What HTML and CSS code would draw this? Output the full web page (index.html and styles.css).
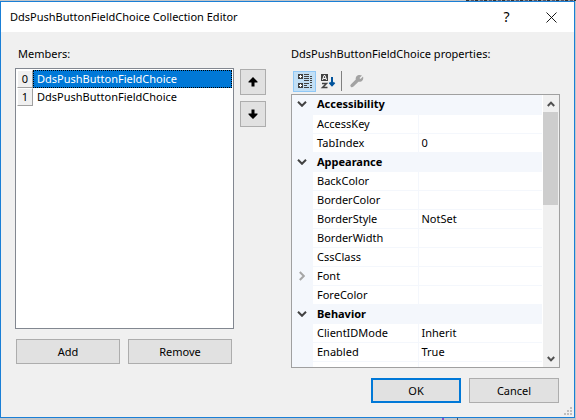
FILE: index.html
```html
<!DOCTYPE html>
<html lang="en">
<head>
<meta charset="utf-8">
<title>DdsPushButtonFieldChoice Collection Editor</title>
<link rel="stylesheet" href="styles.css">
</head>
<body>
<main class="dialog" role="dialog" aria-labelledby="dialog-title">
  <header class="titlebar">
    <h1 class="title" id="dialog-title">DdsPushButtonFieldChoice Collection Editor</h1>
    <button class="caption-button help" type="button">?</button>
    <button class="caption-button" type="button" aria-label="Close">
      <svg width="11" height="11" viewBox="0 0 11 11"><path d="M.5.5l10 10M10.500.5l-10 10" fill="none" stroke="#000" stroke-width=".9"/></svg>
    </button>
  </header>
  <div class="content">
    <div class="columns">
      <section class="members">
        <h2 class="label label-indent" id="members-label">Members:</h2>
        <ul class="listbox" role="listbox" aria-labelledby="members-label">
          <li class="item selected" role="option" aria-selected="true"><span class="index">0</span><span class="item-name">DdsPushButtonFieldChoice</span></li>
          <li class="item" role="option" aria-selected="false"><span class="index">1</span><span class="item-name">DdsPushButtonFieldChoice</span></li>
        </ul>
        <div class="member-actions">
          <button class="button" type="button">Add</button>
          <button class="button" type="button">Remove</button>
        </div>
      </section>
      <div class="movers">
        <button class="button mover" type="button" aria-label="Move up">
          <svg width="10" height="10" viewBox="0 0 10 10"><path d="M5 0L9.500 4.500V5.500H6.500V9.500H3.500V5.500H.5V4.500Z"/></svg>
        </button>
        <button class="button mover" type="button" aria-label="Move down">
          <svg width="10" height="10" viewBox="0 0 10 10"><path d="M5 10L9.500 5.500V4.500H6.500V.5H3.500V4.500H.5V5.500Z"/></svg>
        </button>
      </div>
      <section class="properties">
        <h2 class="label" id="properties-label">DdsPushButtonFieldChoice properties:</h2>
        <div class="toolbar">
          <button class="tool active" type="button" aria-label="Categorized">
            <svg width="16" height="16" viewBox="0 0 16 16" shape-rendering="crispEdges">
              <path d="M1 1h5v5H1zM1 10h5v5H1z" fill="#424242"/>
              <path d="M3 2h1v1h1v1H4v1H3V4H2V3h1zM3 11h1v1h1v1H4v1H3v-1H2v-1h1z" fill="#fff"/>
              <path d="M7 1h5v1H7zM7 3h5v1H7zM7 5h5v1H7zM7 7h5v1H7zM7 10h5v1H7zM7 12h3v1H7zM7 14h5v1H7zM13 3h2v1h-2zM13 5h2v1h-2zM13 7h2v1h-2zM13 9h2v1h-2zM13 12h2v1h-2zM13 14h2v1h-2z" fill="#424242"/>
            </svg>
          </button>
          <button class="tool" type="button" aria-label="Alphabetical">
            <svg width="16" height="16" viewBox="0 0 16 16">
              <path d="M1 1h7v7H1z" fill="#424242"/>
              <path d="M2.500 7L4 2.500h1L6.500 7M3.200 5.500h2.600" fill="none" stroke="#fff"/>
              <path d="M2 10.500h4.500L2.500 14.500H7.500" fill="none" stroke="#424242" stroke-width="1.500"/>
              <path d="M12 4v8M9.500 9.500l2.500 2.800 2.500-2.800" fill="none" stroke="#00539c" stroke-width="2"/>
            </svg>
          </button>
          <span class="separator"></span>
          <button class="tool" type="button" aria-label="Property pages" disabled>
            <svg width="16" height="16" viewBox="0 0 16 16"><path d="M13 2.500L10.500 5 11.500 6 14 3.500C15 6.500 13 9.200 9.500 8.800L4.500 13.500Q3 15 1.800 13.800T2 11.200L6.800 6.500C6 3.200 9.500.8 13 2.500Z" fill="#a3a3a3"/></svg>
          </button>
        </div>
        <div class="property-panel">
          <div class="viewport">
            <table class="grid" aria-labelledby="properties-label">
              <colgroup><col class="col-gutter"><col class="col-name"><col></colgroup>
              <tbody>
                <tr class="category"><td><svg class="chevron" width="10" height="6" viewBox="0 0 10 6"><path d="M1 .8l4 4 4-4"/></svg></td><th colspan="2">Accessibility</th></tr>
                <tr><td></td><th>AccessKey</th><td></td></tr>
                <tr><td></td><th>TabIndex</th><td>0</td></tr>
                <tr class="category"><td><svg class="chevron" width="10" height="6" viewBox="0 0 10 6"><path d="M1 .8l4 4 4-4"/></svg></td><th colspan="2">Appearance</th></tr>
                <tr><td></td><th>BackColor</th><td></td></tr>
                <tr><td></td><th>BorderColor</th><td></td></tr>
                <tr><td></td><th>BorderStyle</th><td>NotSet</td></tr>
                <tr><td></td><th>BorderWidth</th><td></td></tr>
                <tr><td></td><th>CssClass</th><td></td></tr>
                <tr><td><svg class="chevron collapsed" width="6" height="10" viewBox="0 0 6 10"><path d="M.8 1l4 4-4 4"/></svg></td><th>Font</th><td></td></tr>
                <tr><td></td><th>ForeColor</th><td></td></tr>
                <tr class="category"><td><svg class="chevron" width="10" height="6" viewBox="0 0 10 6"><path d="M1 .8l4 4 4-4"/></svg></td><th colspan="2">Behavior</th></tr>
                <tr><td></td><th>ClientIDMode</th><td>Inherit</td></tr>
                <tr><td></td><th>Enabled</th><td>True</td></tr>
                <tr><td></td><th>EnableTheming</th><td>True</td></tr>
              </tbody>
            </table>
          </div>
          <div class="scrollbar">
            <span class="scroll-arrow"><svg width="8" height="6" viewBox="0 0 8 6"><path d="M.8 5L4 1.600 7.200 5"/></svg></span>
            <span class="thumb"></span>
            <span class="scroll-arrow scroll-down"><svg width="8" height="6" viewBox="0 0 8 6"><path d="M.8 1L4 4.400 7.200 1"/></svg></span>
          </div>
        </div>
      </section>
    </div>
    <footer class="footer">
      <button class="button confirm default" type="button">OK</button>
      <button class="button confirm" type="button">Cancel</button>
    </footer>
    <svg class="grip" width="8" height="8" viewBox="0 0 8 8"><path d="M6 0h2v2H6zM3 3h2v2H3zM6 3h2v2H6zM0 6h2v2H0zM3 6h2v2H3zM6 6h2v2H6z" fill="#bfbfbf"/></svg>
  </div>
</main>
</body>
</html>
```
FILE: styles.css
```css
* { box-sizing: border-box; }

body {
  margin: 0;
  height: 100vh;
  padding: 1px 1px 2px 0;
  display: flex;
  background:
    linear-gradient(#8a4fc8, #8a4fc8) 442px 100% / 2px 2px no-repeat,
    linear-gradient(#555, #555) 457px 100% / 1px 2px no-repeat,
    repeating-linear-gradient(90deg, #333 0 3px, #999 3px 5px, #556 5px 8px, #aaa 8px 9px) 466px 0 / 110px 1px no-repeat,
    #c3c5c8;
  color: #000;
  font: 11px/16px "Noto Sans", "Open Sans", sans-serif;
}

h1, h2 { margin: 0; font: inherit; }
button { font: inherit; color: inherit; padding: 0; }
svg { display: block; }

.dialog {
  flex: 1;
  min-width: 0;
  display: flex;
  flex-direction: column;
  border: 1px solid #1a7fd6;
  background: #f0f0f0;
}

.titlebar {
  display: flex;
  align-items: center;
  height: 30px;
  padding-left: 9px;
  background: #fff;
}
.title { flex: 1; }
.caption-button {
  display: grid;
  place-items: center;
  width: 45px;
  height: 30px;
  border: 0;
  background: none;
}
.help { font-size: 14px; }

.content {
  position: relative;
  flex: 1;
  min-height: 0;
  display: flex;
  flex-direction: column;
  padding: 14px;
}
.columns {
  flex: 1;
  min-height: 0;
  display: grid;
  grid-template-columns: minmax(0, 219fr) 57px minmax(0, 269fr);
}
.label { line-height: 16px; white-space: nowrap; }
.label-indent { padding-left: 3px; }

.members, .properties { display: flex; flex-direction: column; min-height: 0; }
.members { padding-bottom: 4px; }
.listbox {
  flex: 1;
  margin: 6px 0 10px;
  padding: 1px;
  border: 1px solid #828790;
  background: #fff;
  list-style: none;
}
.item { display: flex; height: 18px; line-height: 18px; }
.index {
  width: 16px;
  border: 1px solid;
  border-color: #fff #a0a0a0 #a0a0a0 #fff;
  background: #f0f0f0;
  line-height: 16px;
  text-align: center;
}
.item-name { flex: 1; padding-left: 3px; border: 1px solid transparent; line-height: 16px; }
.selected .item-name { background: #0078d7; color: #fff; border: 1px dotted #000; }

.button { height: 25px; border: 1px solid #adadad; background: #e1e1e1; }
.member-actions { display: flex; gap: 8px; padding: 0 2px 0 1px; }
.member-actions .button { flex: 1; }

.movers {
  display: flex;
  flex-direction: column;
  gap: 6px;
  padding: 23px 0 0 6px;
}
.mover { display: grid; place-items: center; width: 26px; height: 26px; }

.toolbar { display: flex; align-items: center; height: 22px; margin: 8px 0 2px 2px; }
.tool {
  display: grid;
  place-items: center;
  width: 23px;
  height: 21px;
  border: 1px solid transparent;
  background: none;
}
.active { border-color: #90c8f6; background: #c2dff5; }
.separator { width: 1px; height: 20px; margin: 0 3px 0 2px; background: #808080; }

.property-panel {
  flex: 1;
  min-height: 0;
  display: flex;
  border: 1px solid #a0a0a0;
  background: #fff;
}
.viewport { flex: 1; min-width: 0; overflow: hidden; padding-right: 1px; }
.grid { width: 100%; table-layout: fixed; border-collapse: collapse; }
.col-gutter { width: 21px; }
.col-name { width: 105px; }
.grid th, .grid td {
  height: 19px;
  padding: 0 0 0 4px;
  border-bottom: 1px solid #f4f7fc;
  line-height: 18px;
  font-weight: 400;
  text-align: left;
  white-space: nowrap;
}
.grid th + td { border-left: 1px solid #f4f7fc; padding-left: 3px; }
.grid td:first-child, .category th { background: #f4f7fc; }
.grid td:first-child { padding: 0 2px 0 0; }
.grid .category th { font-weight: 700; }
.chevron { margin: 0 auto; }
.chevron path { fill: none; stroke: #424242; stroke-width: 2; }
.collapsed path { stroke: #a6a6a6; }

.scrollbar { display: flex; flex-direction: column; width: 16px; background: #f0f0f0; }
.scroll-arrow { display: grid; place-items: center; height: 17px; }
.scroll-arrow path { fill: none; stroke: #505050; stroke-width: 2; }
.thumb { flex: 0 1 93px; margin-right: 1px; background: #cdcdcd; }
.scroll-down { margin-top: auto; }

.footer { display: flex; justify-content: flex-end; gap: 8px; padding: 10px 1px 0 0; }
.confirm { width: 90px; }
.default { border: 2px solid #0078d7; }
.grip { position: absolute; right: 2px; bottom: 2px; }
```
